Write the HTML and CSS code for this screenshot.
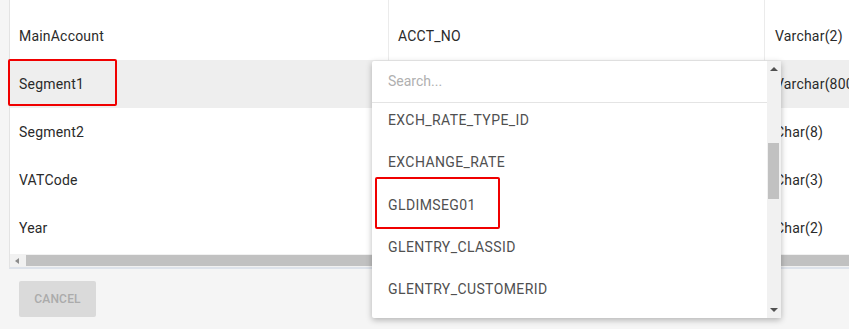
FILE: index.html
```html
<!DOCTYPE html>
<html lang="en">
<head>
    <meta charset="UTF-8">
    <meta name="viewport" content="width=device-width, initial-scale=1.0">
    <title>Field mapping</title>
    <link rel="stylesheet" href="styles.css">
</head>
<body>
    <div class="panel">
        <div class="grid">
            <div class="grid-view">
                <table class="map-table">
                    <tbody>
                        <tr class="partial"><td></td><td></td><td></td></tr>
                        <tr><td>MainAccount</td><td>ACCT_NO</td><td>Varchar(2)</td></tr>
                        <tr class="active"><td><span class="mark mark-cell"></span>Segment1</td><td></td><td>Varchar(800)</td></tr>
                        <tr><td>Segment2</td><td></td><td>Char(8)</td></tr>
                        <tr><td>VATCode</td><td></td><td>Char(3)</td></tr>
                        <tr><td>Year</td><td></td><td>Char(2)</td></tr>
                    </tbody>
                </table>
            </div>
            <div class="hscroll">
                <span class="arrow-left"></span>
                <span class="hthumb"></span>
            </div>
        </div>
        <div class="actions">
            <button class="btn-cancel" disabled>Cancel</button>
        </div>

        <div class="dropdown">
            <div class="dropdown-body">
                <div class="search">Search...</div>
                <div class="options">
                    <ul class="option-list">
                        <li>EXCH_RATE_TYPE_ID</li>
                        <li>EXCHANGE_RATE</li>
                        <li><span class="mark mark-option"></span>GLDIMSEG01</li>
                        <li>GLENTRY_CLASSID</li>
                        <li>GLENTRY_CUSTOMERID</li>
                    </ul>
                </div>
            </div>
            <div class="vscroll">
                <span class="arrow-up"></span>
                <span class="vthumb"></span>
                <span class="arrow-down"></span>
            </div>
        </div>
    </div>
</body>
</html>
```

FILE: styles.css
```css
body {
    margin: 0;
    padding: 0;
    background-color: #f5f5f5;
    font-family: Roboto, "Liberation Sans", Arial, sans-serif;
    overflow: hidden;
}
.panel {
    position: relative;
    padding-left: 9px;
    height: 329px;
}
.grid {
    background: white;
    border-left: 1px solid #e3e3e3;
    border-bottom: 2px solid #dde2ea;
}
.grid-view {
    height: 254px;
}
.map-table {
    border-collapse: collapse;
    width: 100%;
    table-layout: fixed;
}
.map-table td {
    height: 48px;
    padding: 0 0 0 9px;
    font-size: 14px;
    letter-spacing: 0.2px;
    color: #2a2a2a;
    border-right: 1px solid #ebebeb;
    white-space: nowrap;
    position: relative;
}
.map-table tr.partial td {
    height: 12px;
}
.map-table td:nth-child(1) {
    width: 369px;
}
.map-table td:nth-child(2) {
    width: 366px;
}
.map-table td:nth-child(3) {
    padding-left: 10px;
    border-right: none;
    overflow: hidden;
}
.map-table tr.active td {
    background-color: #eeeeee;
}
.mark {
    position: absolute;
    border: 2px solid #f00000;
    border-radius: 2px;
}
.mark-cell {
    left: -2px;
    top: -1px;
    width: 105px;
    height: 43px;
}
.mark-option {
    left: 3px;
    top: -7px;
    width: 121px;
    height: 48px;
}
.hscroll {
    height: 13px;
    background: #f1f1f1;
    display: flex;
    align-items: center;
}
.arrow-left {
    width: 0;
    height: 0;
    margin-left: 5px;
    border-top: 3px solid transparent;
    border-bottom: 3px solid transparent;
    border-right: 4px solid #8c8c8c;
}
.hthumb {
    flex: 1;
    height: 11px;
    margin-left: 7px;
    background: #c1c1c1;
}
.actions {
    padding: 12px 0 0 10px;
}
.btn-cancel {
    width: 77px;
    height: 36px;
    border: none;
    border-radius: 2px;
    background: #dadada;
    color: #ababab;
    font-family: Roboto, "Liberation Sans", Arial, sans-serif;
    font-size: 12px;
    font-weight: 500;
    letter-spacing: 0.2px;
    text-transform: uppercase;
}

/* open select menu */
.dropdown {
    position: absolute;
    left: 372px;
    top: 61px;
    width: 409px;
    height: 257px;
    background: white;
    box-shadow: 0 2px 6px rgba(0, 0, 0, 0.28);
    border-radius: 2px;
    display: flex;
}
.dropdown-body {
    flex: 1;
    display: flex;
    flex-direction: column;
}
.search {
    height: 41px;
    line-height: 41px;
    padding-left: 16px;
    font-size: 14px;
    color: #b0b0b0;
    border-bottom: 1px solid #e4e4e4;
}
.options {
    flex: 1;
    overflow: hidden;
}
.option-list {
    list-style: none;
    margin: -4px 0 0;
    padding: 0;
}
.option-list li {
    position: relative;
    height: 42.3px;
    line-height: 42.3px;
    padding-left: 16px;
    font-size: 14px;
    letter-spacing: 0.4px;
    color: #505050;
}
.vscroll {
    width: 14px;
    background: #f1f1f1;
    position: relative;
}
.arrow-up, .arrow-down {
    position: absolute;
    left: 3px;
    width: 0;
    height: 0;
    border-left: 4px solid transparent;
    border-right: 4px solid transparent;
}
.arrow-up {
    top: 6px;
    border-bottom: 4px solid #505050;
}
.arrow-down {
    bottom: 6px;
    border-top: 4px solid #505050;
}
.vthumb {
    position: absolute;
    left: 1px;
    right: 2px;
    top: 82px;
    height: 56px;
    background: #c1c1c1;
}
```
